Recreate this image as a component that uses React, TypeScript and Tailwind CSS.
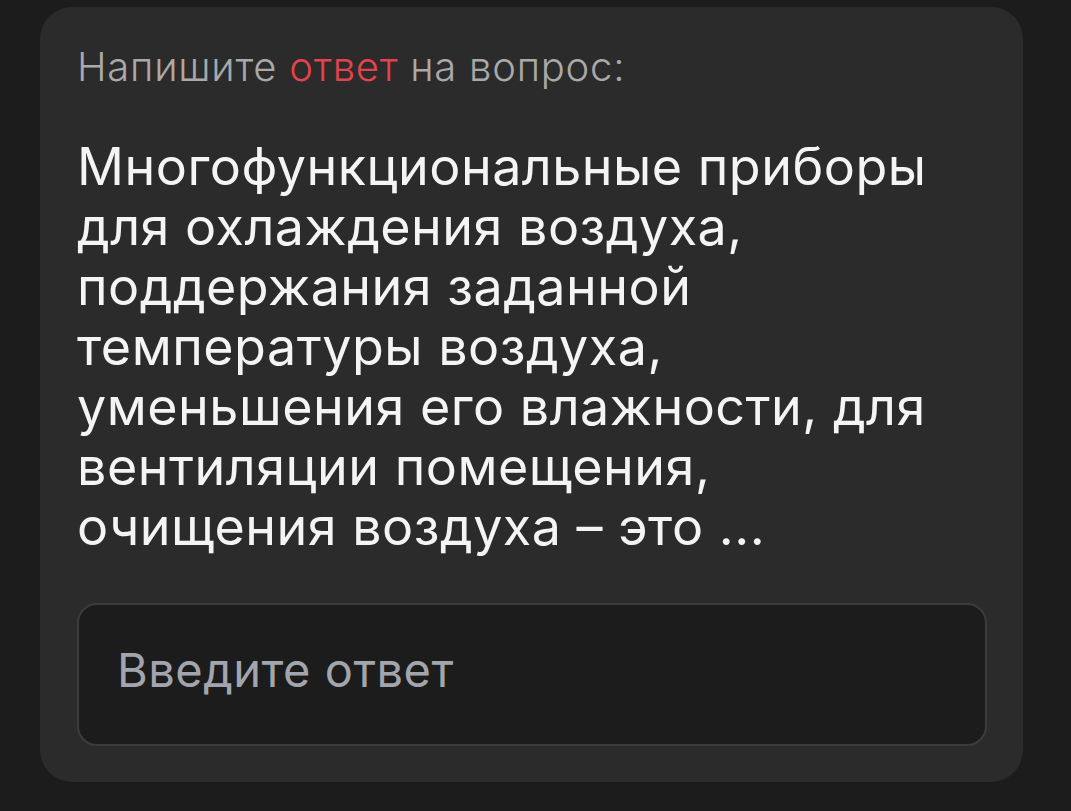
export default function App() {
  return (
    <div className="min-h-[811px] bg-[#1c1c1c] pl-[40px] pr-[48px] pt-[7px] pb-[29px]">
      <div className="rounded-[32px] bg-[#2b2b2b] px-[37px] pr-[36px] pb-[36px] pt-[36px] font-['Inter',sans-serif]">
        <p className="text-[40px] font-light leading-[48px] tracking-[0.75px] text-[#a9a9a9]">
          Напишите <span className="text-[#e2434c]">ответ</span> на вопрос:
        </p>
        <p className="mt-[46px] text-[52px] font-normal leading-[60px] tracking-[0.5px] text-[#f4f4f4]">
          Многофункциональные приборы
          <br />
          для охлаждения воздуха,
          <br />
          поддержания заданной
          <br />
          температуры воздуха,
          <br />
          уменьшения его влажности, для
          <br />
          вентиляции помещения,
          <br />
          очищения воздуха – это ...
        </p>
        <textarea
          placeholder="Введите ответ"
          className="mt-[46px] block h-[143px] w-full resize-none rounded-[20px] border-2 border-[#3c3c3c] bg-[#1c1c1c] px-[38px] pt-[37px] font-['Inter',sans-serif] text-[47px] leading-[56px] tracking-[0.5px] text-white outline-none placeholder:text-[#a2a5ad]"
        />
      </div>
    </div>
  )
}
